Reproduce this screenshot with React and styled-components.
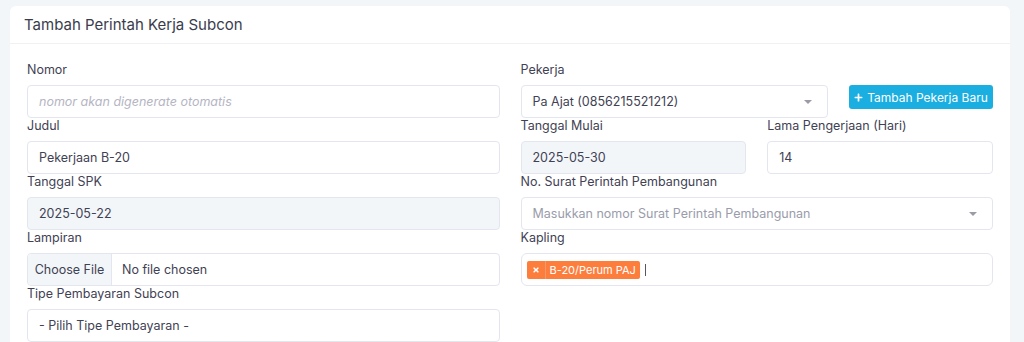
import styled, { createGlobalStyle } from 'styled-components';
import { FaPlus, FaTimes } from 'react-icons/fa';

const Global = createGlobalStyle`
    body{
        margin: 0;
        background: #f3f6f9;
        font-family: 'Inter', 'Noto Sans', sans-serif;
        color: #3f4254;
    }
`

function App(){
    return (
        <Page>
            <Global/>
            <Card>
                <CardHeader>
                    <h3>Tambah Perintah Kerja Subcon</h3>
                </CardHeader>
                <CardBody>
                    <Column>
                        <Field>
                            <Label>Nomor</Label>
                            <Input placeholder='nomor akan digenerate otomatis' italic/>
                        </Field>
                        <Field>
                            <Label>Judul</Label>
                            <Input value='Pekerjaan B-20' readOnly/>
                        </Field>
                        <Field>
                            <Label>Tanggal SPK</Label>
                            <Input value='2025-05-22' readOnly disabled/>
                        </Field>
                        <Field>
                            <Label>Lampiran</Label>
                            <FileBox>
                                <span className='btn'>Choose File</span>
                                <span>No file chosen</span>
                            </FileBox>
                        </Field>
                        <Field>
                            <Label>Tipe Pembayaran Subcon</Label>
                            <SelectBox>- Pilih Tipe Pembayaran -</SelectBox>
                        </Field>
                    </Column>

                    <Column>
                        <Split cols='1fr 144px'>
                            <Field>
                                <Label>Pekerja</Label>
                                <SelectBox>
                                    Pa Ajat (0856215521212)
                                    <Caret/>
                                </SelectBox>
                            </Field>
                            <AddButton>
                                <FaPlus size={9}/> Tambah Pekerja Baru
                            </AddButton>
                        </Split>
                        <Split cols='1fr 1fr'>
                            <Field>
                                <Label>Tanggal Mulai</Label>
                                <Input value='2025-05-30' readOnly disabled/>
                            </Field>
                            <Field>
                                <Label>Lama Pengerjaan (Hari)</Label>
                                <Input value='14' readOnly/>
                            </Field>
                        </Split>
                        <Field>
                            <Label>No. Surat Perintah Pembangunan</Label>
                            <SelectBox muted>
                                Masukkan nomor Surat Perintah Pembangunan
                                <Caret/>
                            </SelectBox>
                        </Field>
                        <Field>
                            <Label>Kapling</Label>
                            <TagBox>
                                <Tag>
                                    <span className='x'><FaTimes size={8}/></span>
                                    <span className='txt'>B-20/Perum PAJ</span>
                                </Tag>
                                <Cursor/>
                            </TagBox>
                        </Field>
                    </Column>
                </CardBody>
            </Card>
        </Page>
    )
}

const Page = styled.div`
    height: 100vh;
    overflow: hidden;
    box-sizing: border-box;
    padding: 6px 14px 0 10px;
`

const Card = styled.div`
    background: #FFFFFF;
    border-radius: 6px;
    height: 400px;
`

const CardHeader = styled.div`
    height: 37px;
    border-bottom: 1px solid #f0f1f4;
    display: flex;
    align-items: center;
    padding: 0 14px;

    h3{
        margin: 0;
        font-size: 15px;
        font-weight: 400;
        color: #3a3c4c;
    }
`

const CardBody = styled.div`
    display: grid;
    grid-template-columns: 1fr 1fr;
    column-gap: 21px;
    padding: 18px 17px 0 17px;
`

const Column = styled.div`
    display: flex;
    flex-direction: column;
`

const Split = styled.div`
    display: grid;
    grid-template-columns: ${p => p.cols};
    column-gap: 21px;
    align-items: start;
`

const Field = styled.div`
    display: flex;
    flex-direction: column;
`

const Label = styled.label`
    font-size: 12.5px;
    line-height: 15px;
    height: 15px;
    margin-bottom: 8px;
    color: #3f4254;
`

const Input = styled.input`
    box-sizing: border-box;
    height: 33px;
    width: 100%;
    border: 1px solid #e4e6ef;
    border-radius: 4px;
    padding: 0 11px;
    font-family: inherit;
    font-size: 12.5px;
    color: #3f4254;
    background: #FFFFFF;
    outline: none;

    &:disabled{
        background: #f3f6f9;
        color: #3f4254;
        -webkit-text-fill-color: #3f4254;
    }

    &::placeholder{
        color: #b5b5c3;
        font-style: ${p => p.italic ? 'italic' : 'normal'};
    }
`

const SelectBox = styled.div`
    box-sizing: border-box;
    height: 33px;
    border: 1px solid #e4e6ef;
    border-radius: 4px;
    padding: 0 11px;
    display: flex;
    align-items: center;
    justify-content: space-between;
    font-size: 12.5px;
    color: ${p => p.muted ? '#9a9cab' : '#3f4254'};
`

const Caret = styled.span`
    width: 0;
    height: 0;
    margin-right: 4px;
    border-left: 4px solid transparent;
    border-right: 4px solid transparent;
    border-top: 4px solid #999ba6;
`

const FileBox = styled.div`
    box-sizing: border-box;
    height: 33px;
    border: 1px solid #e4e6ef;
    border-radius: 4px;
    display: flex;
    align-items: center;
    overflow: hidden;
    font-size: 12.5px;

    .btn{
        box-sizing: border-box;
        width: 84px;
        height: 100%;
        display: flex;
        align-items: center;
        justify-content: center;
        background: #f3f6f9;
        border-right: 1px solid #e4e6ef;
        margin-right: 10px;
    }
`

const AddButton = styled.button`
    margin-top: 23px;
    height: 24px;
    border: none;
    border-radius: 3px;
    background: #1aaee1;
    color: #FFFFFF;
    font-family: inherit;
    font-size: 12px;
    display: flex;
    align-items: center;
    justify-content: center;
    gap: 4px;
    padding: 0;
`

const TagBox = styled.div`
    box-sizing: border-box;
    height: 33px;
    border: 1px solid #e4e6ef;
    border-radius: 6px;
    display: flex;
    align-items: center;
    padding: 0 5px;
    gap: 5px;
`

const Tag = styled.span`
    display: flex;
    align-items: center;
    height: 18px;
    background: #fd7d3c;
    border-radius: 2px;
    color: #FFFFFF;
    font-size: 11px;

    .x{
        display: flex;
        align-items: center;
        height: 18px;
        padding: 0 5px;
        border-right: 1px solid #f49a6a;
    }

    .txt{
        padding: 0 4px;
    }
`

const Cursor = styled.span`
    width: 1px;
    height: 12px;
    background: #555766;
`

export default App;
